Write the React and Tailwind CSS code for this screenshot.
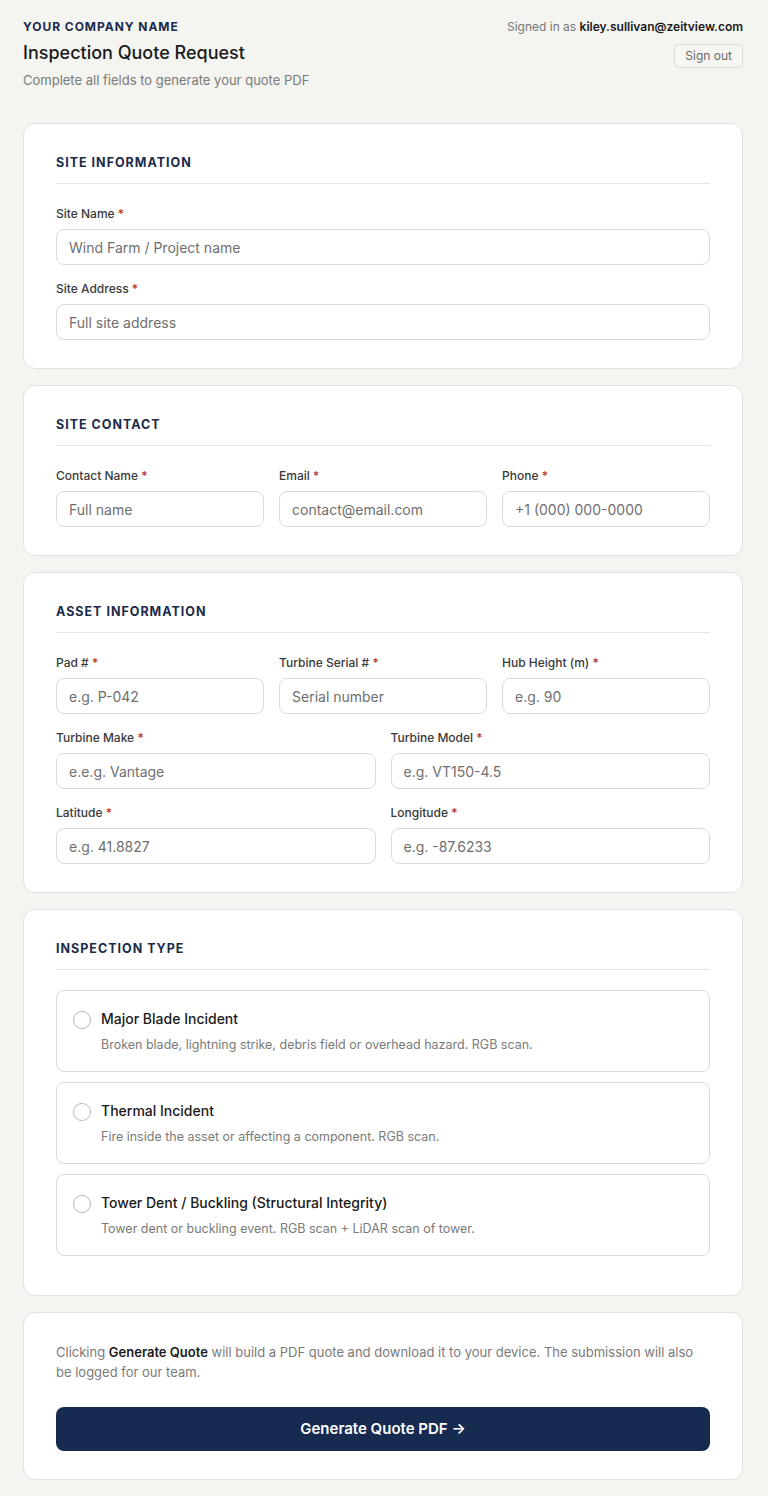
import React, { useState } from 'react';

const font = { fontFamily: 'Inter, "Noto Sans", sans-serif' };

// Field label with red required mark
const Label = ({ children }) => (
  <div className="text-xs leading-4 font-medium text-[#3a3a3a] mb-[7px]">
    {children} <span className="text-[#b3362c]">*</span>
  </div>
);

const Field = ({ label, placeholder }) => (
  <div className="min-w-0">
    <Label>{label}</Label>
    <input
      placeholder={placeholder}
      className="w-full h-9 px-3 rounded-lg border border-[#dcdcd6] bg-white text-sm text-[#222] placeholder:text-[#6f6f6f] outline-none"
    />
  </div>
);

const Card = ({ title, tight, children }) => (
  <section className="bg-white border border-[#e2e2dc] rounded-xl px-8 pt-[29px] pb-7">
    {title && (
      <h2
        className={`text-[12.5px] leading-5 font-bold tracking-[0.08em] text-[#1b2a4a] pb-2.5 border-b border-[#e6e6e1] ${
          tight ? 'mb-5' : 'mb-[22px]'
        }`}
      >
        {title}
      </h2>
    )}
    {children}
  </section>
);

const options = [
  {
    title: 'Major Blade Incident',
    desc: 'Broken blade, lightning strike, debris field or overhead hazard. RGB scan.'
  },
  {
    title: 'Thermal Incident',
    desc: 'Fire inside the asset or affecting a component. RGB scan.'
  },
  {
    title: 'Tower Dent / Buckling (Structural Integrity)',
    desc: 'Tower dent or buckling event. RGB scan + LiDAR scan of tower.'
  }
];

export default function App() {
  const [selected, setSelected] = useState(null);

  return (
    <div style={font} className="min-h-screen bg-[#f4f4f0] pl-[23px] pr-[25px] pt-[19px] pb-4">
      {/* Header */}
      <header className="flex justify-between items-start">
        <div>
          <div className="text-xs leading-4 font-bold tracking-[0.08em] text-[#1b2a4a]">YOUR COMPANY NAME</div>
          <h1 className="text-lg leading-6 font-medium text-[#1a1a1a] mt-[6px]">Inspection Quote Request</h1>
          <p className="text-[13px] leading-5 text-[#7a7a7a] mt-[5px]">Complete all fields to generate your quote PDF</p>
        </div>
        <div className="flex flex-col items-end">
          <div className="text-xs leading-4 text-[#777]">
            Signed in as <span className="font-semibold text-[#1a1a1a]">kiley.sullivan@zeitview.com</span>
          </div>
          <button className="mt-[9px] h-6 px-[10px] text-xs text-[#6a6a6a] border border-[#dadad4] rounded-[5px] bg-[#f6f6f3]">
            Sign out
          </button>
        </div>
      </header>

      <main className="mt-[33px] flex flex-col gap-4">
        <Card title="SITE INFORMATION">
          <div className="flex flex-col gap-4">
            <Field label="Site Name" placeholder="Wind Farm / Project name" />
            <Field label="Site Address" placeholder="Full site address" />
          </div>
        </Card>

        <Card title="SITE CONTACT">
          <div className="grid grid-cols-3 gap-x-[15px]">
            <Field label="Contact Name" placeholder="Full name" />
            <Field label="Email" placeholder="contact@email.com" />
            <Field label="Phone" placeholder="+1 (000) 000-0000" />
          </div>
        </Card>

        <Card title="ASSET INFORMATION">
          <div className="flex flex-col gap-4">
            <div className="grid grid-cols-3 gap-x-[15px]">
              <Field label="Pad #" placeholder="e.g. P-042" />
              <Field label="Turbine Serial #" placeholder="Serial number" />
              <Field label="Hub Height (m)" placeholder="e.g. 90" />
            </div>
            <div className="grid grid-cols-2 gap-x-[15px]">
              <Field label="Turbine Make" placeholder="e.e.g. Vantage" />
              <Field label="Turbine Model" placeholder="e.g. VT150-4.5" />
            </div>
            <div className="grid grid-cols-2 gap-x-[15px]">
              <Field label="Latitude" placeholder="e.g. 41.8827" />
              <Field label="Longitude" placeholder="e.g. -87.6233" />
            </div>
          </div>
        </Card>

        <Card title="INSPECTION TYPE" tight>
          <div className="flex flex-col gap-[10px] mb-[11px]">
            {options.map((o, i) => (
              <label
                key={o.title}
                onClick={() => setSelected(i)}
                className="flex gap-[10px] h-[82px] px-4 pt-[18px] border border-[#dcdcd6] rounded-lg cursor-pointer"
              >
                <span className="mt-[2px] w-[18px] h-[18px] shrink-0 rounded-full border border-[#b8b8b3] bg-white flex items-center justify-center">
                  {selected === i && <span className="w-2 h-2 rounded-full bg-[#172a4f]" />}
                </span>
                <span>
                  <span className="block text-sm leading-5 font-medium text-[#1a1a1a]">{o.title}</span>
                  <span className="block text-[12.5px] leading-4 text-[#7a7a7a] mt-[8px]">{o.desc}</span>
                </span>
              </label>
            ))}
          </div>
        </Card>

        <Card>
          <p className="text-[13px] leading-5 text-[#7a7a7a]">
            Clicking <b className="font-semibold text-[#1a1a1a]">Generate Quote</b> will build a PDF quote and download it to your device. The submission will also be logged for our team.
          </p>
          <button className="mt-[25px] w-full h-11 rounded-lg bg-[#172a4f] text-white text-[15px] font-semibold">
            Generate Quote PDF →
          </button>
        </Card>
      </main>
    </div>
  );
}
